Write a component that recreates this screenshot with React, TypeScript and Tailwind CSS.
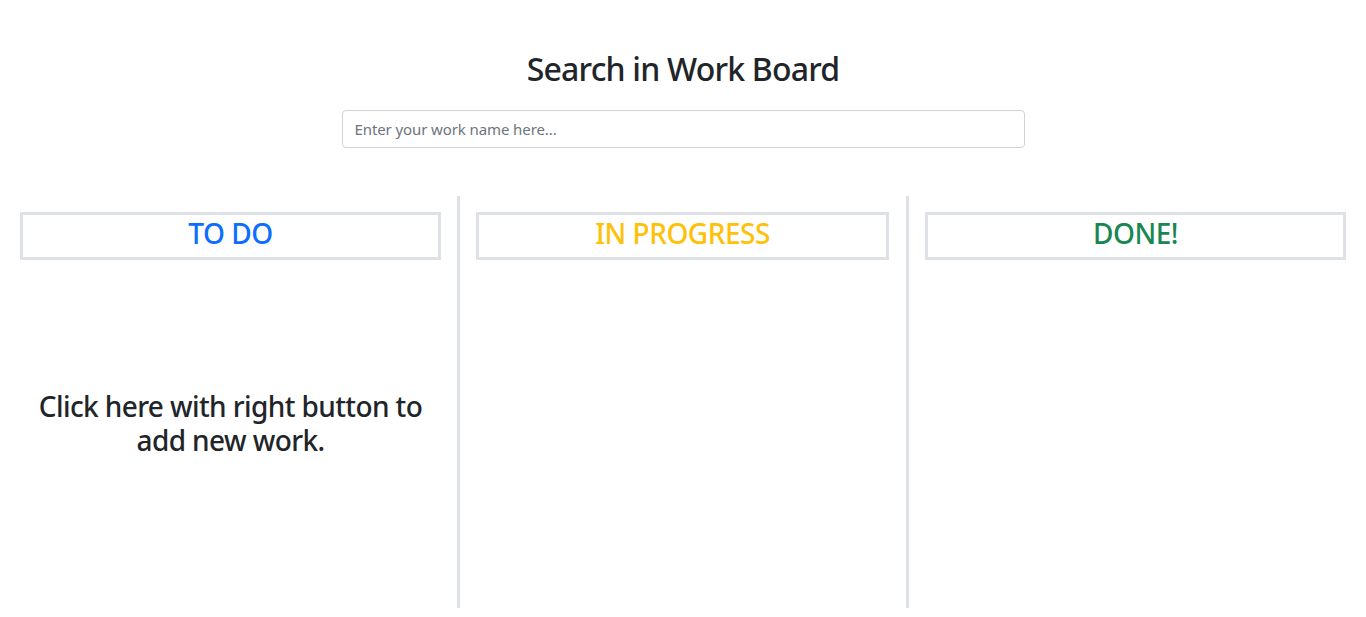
import React from "react";

const font = { fontFamily: '"Segoe UI", "Noto Sans", "Open Sans", sans-serif' };

function Column({
  title,
  color,
  pl,
  pr,
  children,
}: {
  title: string;
  color: string;
  pl: string;
  pr: string;
  children?: React.ReactNode;
}) {
  return (
    <div className={`flex flex-col pt-[16px] ${pl} ${pr}`}>
      <div className="border-[3px] border-[#dee2e6] h-[48px] flex justify-center pt-[2px]">
        <h3 className={`text-[28px] font-medium leading-[33.6px] tracking-[-0.5px] ${color}`}>{title}</h3>
      </div>
      {children}
    </div>
  );
}

export default function App() {
  return (
    <div className="w-[1366px] h-[617px] bg-white text-[#212529] overflow-hidden" style={font}>
      <div className="flex flex-col items-center pt-[50px]">
        <h2 className="text-[32px] font-medium leading-[38px] tracking-[-0.8px]">Search in Work Board</h2>
        <input
          type="text"
          placeholder="Enter your work name here..."
          className="mt-[22px] w-[683px] h-[38px] border border-[#ced4da] rounded-[4px] px-[12px] text-[15px] tracking-[-0.1px] placeholder:text-[#6c757d] outline-none"
        />
      </div>
      <div className="flex mt-[48px] h-[412px]">
        <div className="w-[457px] shrink-0">
          <Column title="TO DO" color="text-[#0d6efd]" pl="pl-[20px]" pr="pr-[16px]">
            <div className="mt-[129px] text-center text-[28px] font-medium leading-[34px] tracking-[-0.6px] whitespace-nowrap">
              <div>Click here with right button to</div>
              <div>add new work.</div>
            </div>
          </Column>
        </div>
        <div className="w-[3px] bg-[#dee2e6] shrink-0" />
        <div className="w-[446px] shrink-0">
          <Column title="IN PROGRESS" color="text-[#ffc107]" pl="pl-[16px]" pr="pr-[17px]" />
        </div>
        <div className="w-[3px] bg-[#dee2e6] shrink-0" />
        <div className="flex-1">
          <Column title="DONE!" color="text-[#198754]" pl="pl-[16px]" pr="pr-[20px]" />
        </div>
      </div>
    </div>
  );
}
